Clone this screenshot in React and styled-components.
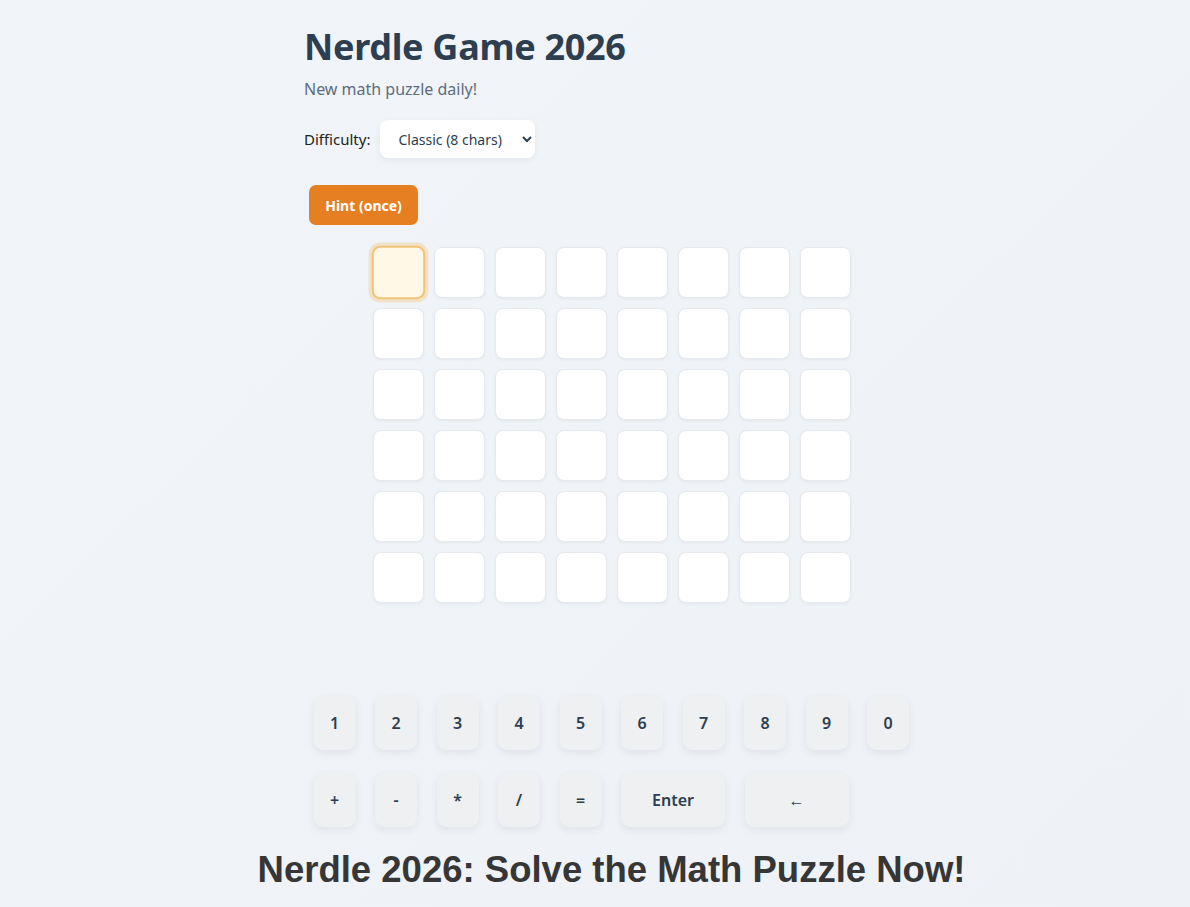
// Nerdle game page
import React, { useState } from 'react';
import styled, { createGlobalStyle } from 'styled-components';

//----------------  Global  ----------------//
const GlobalStyle = createGlobalStyle`
    html, body {
        margin: 0;
        padding: 0;
    }
    body {
        background: linear-gradient(135deg, #f1f4f8 0%, #eef2f6 100%);
        min-height: 907px;
        font-family: 'Noto Sans', 'Open Sans', sans-serif;
        color: #2c3e50;
    }
`;

//----------------  Layout  ----------------//
const Main = styled.main`
    width: 615px;
    margin-left: 304px;
    padding-top: 25px;
    display: flex;
    flex-direction: column;
`;

const Title = styled.h1`
    margin: 0;
    font-size: 36px;
    line-height: 1.2;
    font-weight: 700;
    color: #2c3e50;
    letter-spacing: -0.3px;
`;

const Subtitle = styled.p`
    margin: 10px 0 0;
    font-size: 16px;
    color: #5d6d7e;
`;

// Difficulty row
const SettingsRow = styled.div`
    display: flex;
    align-items: center;
    gap: 10px;
    margin-top: 20px;

    label {
        font-size: 15px;
        color: #222;
    }
`;

const Select = styled.select`
    width: 155px;
    height: 38px;
    padding: 0 8px 0 14px;
    border: none;
    border-radius: 8px;
    background: #fff;
    font-family: 'Noto Sans', sans-serif;
    font-size: 14px;
    color: #2c3e50;
    box-shadow: 0 2px 6px rgba(0, 0, 0, 0.06);
`;

const HintButton = styled.button`
    align-self: flex-start;
    margin: 27px 0 0 5px;
    width: 109px;
    height: 40px;
    border: none;
    border-radius: 7px;
    background: #e67e22;
    color: #fff;
    font-family: 'Noto Sans', sans-serif;
    font-size: 14px;
    font-weight: 700;
    cursor: pointer;
`;

//----------------  Board  ----------------//
const Board = styled.div`
    align-self: center;
    display: grid;
    grid-template-columns: repeat(8, 51px);
    grid-auto-rows: 51px;
    gap: 10px;
    margin-top: 22px;
`;

const Cell = styled.div`
    box-sizing: border-box;
    border-radius: 8px;
    background: ${(p) => (p.$active ? '#fff8e6' : '#fff')};
    border: ${(p) => (p.$active ? '2px solid #f2c478' : '1px solid #e6e9ee')};
    box-shadow: ${(p) =>
        p.$active
            ? '0 0 0 3px rgba(243, 170, 60, 0.25)'
            : '0 1px 3px rgba(0, 0, 0, 0.05)'};
    transform: ${(p) => (p.$active ? 'scale(1.05)' : 'none')};
`;

//----------------  Keyboard  ----------------//
const Keyboard = styled.div`
    align-self: center;
    width: 596px;
    margin-top: 93px;
    display: flex;
    flex-direction: column;
    gap: 23px;
`;

const KeyRow = styled.div`
    display: flex;
    gap: 19.5px;
`;

const Key = styled.button`
    width: ${(p) => (p.$wide ? '104px' : '42px')};
    height: 54px;
    padding: 0;
    border: none;
    border-radius: 9px;
    background: #eef0f2;
    color: #2c3e50;
    font-family: 'Noto Sans', sans-serif;
    font-size: 16px;
    font-weight: 600;
    box-shadow: 0 3px 8px rgba(0, 0, 0, 0.07);
    cursor: pointer;
`;

const Footer = styled.div`
    display: flex;
    justify-content: center;
    margin-top: 22px;
`;

const BigHeading = styled.h2`
    margin: 0;
    white-space: nowrap;
    font-family: 'Liberation Sans', Arial, sans-serif;
    font-size: 36.5px;
    font-weight: 700;
    color: #363636;
`;

const ROWS = 6;
const COLS = 8;
const TOP_KEYS = ['1', '2', '3', '4', '5', '6', '7', '8', '9', '0'];
const BOTTOM_KEYS = ['+', '-', '*', '/', '='];

const App = () => {
    //----------------  Setting States  ----------------//
    const [difficulty, setDifficulty] = useState('classic');

    const cells = [];
    for (let r = 0; r < ROWS; r++) {
        for (let c = 0; c < COLS; c++) {
            cells.push(<Cell key={`${r}-${c}`} $active={r === 0 && c === 0} />);
        }
    }

    // Render content
    return (
        <>
            <GlobalStyle />
            <Main>
                <Title>Nerdle Game 2026</Title>
                <Subtitle>New math puzzle daily!</Subtitle>
                <SettingsRow>
                    <label htmlFor='difficulty'>Difficulty:</label>
                    <Select
                        id='difficulty'
                        value={difficulty}
                        onChange={(e) => setDifficulty(e.target.value)}
                    >
                        <option value='easy'>Mini (6 chars)</option>
                        <option value='classic'>Classic (8 chars)</option>
                        <option value='hard'>Maxi (10 chars)</option>
                    </Select>
                </SettingsRow>
                <HintButton>Hint (once)</HintButton>
                <Board>{cells}</Board>
                <Keyboard>
                    <KeyRow>
                        {TOP_KEYS.map((k) => (
                            <Key key={k}>{k}</Key>
                        ))}
                    </KeyRow>
                    <KeyRow>
                        {BOTTOM_KEYS.map((k) => (
                            <Key key={k}>{k}</Key>
                        ))}
                        <Key $wide>Enter</Key>
                        <Key $wide>←</Key>
                    </KeyRow>
                </Keyboard>
                <Footer>
                    <BigHeading>Nerdle 2026: Solve the Math Puzzle Now!</BigHeading>
                </Footer>
            </Main>
        </>
    );
};

export default App;
